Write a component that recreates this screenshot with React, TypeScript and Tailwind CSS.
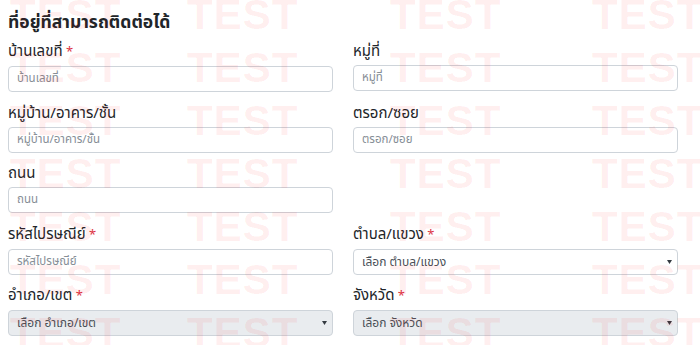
import React from "react";

type Field = {
  label: string;
  placeholder?: string;
  required?: boolean;
  select?: boolean;
  disabled?: boolean;
};

const rows: (Field | null)[][] = [
  [
    { label: "บ้านเลขที่", placeholder: "บ้านเลขที่", required: true },
    { label: "หมู่ที่", placeholder: "หมู่ที่" },
  ],
  [
    { label: "หมู่บ้าน/อาคาร/ชั้น", placeholder: "หมู่บ้าน/อาคาร/ชั้น" },
    { label: "ตรอก/ซอย", placeholder: "ตรอก/ซอย" },
  ],
  [{ label: "ถนน", placeholder: "ถนน" }, null],
  [
    { label: "รหัสไปรษณีย์", placeholder: "รหัสไปรษณีย์", required: true },
    { label: "ตำบล/แขวง", placeholder: "เลือก ตำบล/แขวง", required: true, select: true },
  ],
  [
    { label: "อำเภอ/เขต", placeholder: "เลือก อำเภอ/เขต", required: true, select: true, disabled: true },
    { label: "จังหวัด", placeholder: "เลือก จังหวัด", required: true, select: true, disabled: true },
  ],
];

function Caret() {
  return (
    <svg width="5" height="4" viewBox="0 0 5 4" className="shrink-0">
      <polygon points="0,0 5,0 2.5,4" fill="#343a40" />
    </svg>
  );
}

function FormField({ field }: { field: Field }) {
  return (
    <div className="mb-[10.5px]">
      <label className="block text-[15px] leading-[21px] mb-[3px] text-[#212529]">
        {field.label}
        {field.required && <span className="text-[13px] text-[#dc3545]"> *</span>}
      </label>
      {field.select ? (
        <div
          className={`h-[26px] flex items-center justify-between pl-[8px] pr-[5px] rounded-[4px] border border-[#ced4da] text-[12px] text-[#495057] ${
            field.disabled ? "bg-[#e9ecef]" : "bg-white"
          }`}
        >
          <span>{field.placeholder}</span>
          <Caret />
        </div>
      ) : (
        <div className="h-[26px] flex items-center pl-[8px] rounded-[4px] border border-[#ced4da] bg-white text-[11.5px] text-[#868e96]">
          {field.placeholder}
        </div>
      )}
    </div>
  );
}

export default function App() {
  const marks = [0, 1, 2, 3, 4, 5, 6];
  return (
    <div className="relative w-[700px] h-[345px] overflow-hidden bg-white font-['Noto_Sans_Thai','Noto_Sans',sans-serif]">
      <main className="pl-[8px] pr-[22px]">
        <h1 className="text-[17.5px] leading-[41px] pt-[2px] -mb-[2px] font-bold text-[#212529]">ที่อยู่ที่สามารถติดต่อได้</h1>
        {rows.map((row, i) => (
          <div key={i} className="grid grid-cols-2 gap-x-[20px]">
            {row.map((f, j) => (f ? <FormField key={j} field={f} /> : <div key={j} />))}
          </div>
        ))}
      </main>

      {/* watermark overlay */}
      <div className="pointer-events-none absolute left-0 top-[-6px] w-full flex flex-col">
        {marks.map((m) => (
          <div
            key={m}
            className="h-[53px] grid grid-cols-[177px_203px_202px_auto] pl-[10px] text-[42px] leading-[42px] font-bold tracking-[1px] text-[rgba(255,0,0,0.07)] font-['Liberation_Sans',Arial,sans-serif]"
          >
            <span>TEST</span>
            <span>TEST</span>
            <span>TEST</span>
            <span>TEST</span>
          </div>
        ))}
      </div>
    </div>
  );
}
